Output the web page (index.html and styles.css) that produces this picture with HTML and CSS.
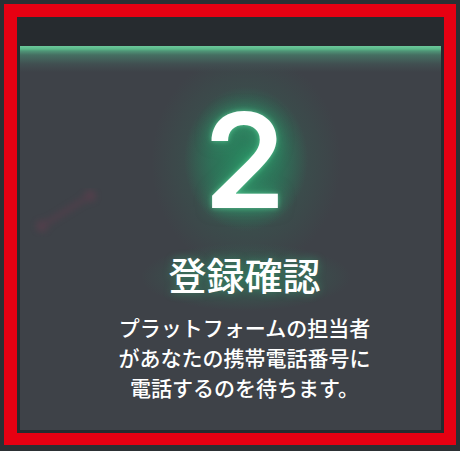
FILE: index.html
```html
<!DOCTYPE html>
<html lang="ja">
<head>
<meta charset="utf-8">
<link rel="stylesheet" href="styles.css">
</head>
<body>
<div class="frame">
  <div class="inner">
    <div class="topbar"></div>
    <div class="panel">
      <svg class="smudge" width="80" height="50" viewBox="0 0 80 50">
        <defs><filter id="b"><feGaussianBlur stdDeviation="3"/></filter></defs>
        <g filter="url(#b)" fill="#7a3a52" opacity="0.35">
          <circle cx="12" cy="38" r="6"/>
          <circle cx="60" cy="8" r="6"/>
          <path d="M12 38 L60 8" stroke="#6a3a50" stroke-width="6"/>
        </g>
      </svg>
      <div class="num">2</div>
      <div class="title">登録確認</div>
      <p class="desc">プラットフォームの担当者<br>があなたの携帯電話番号に<br>電話するのを待ちます。</p>
    </div>
  </div>
</div>
</body>
</html>
```
FILE: styles.css
```css
html, body {
  margin: 0;
  padding: 0;
  background: #2b3034;
}
body {
  width: 460px;
  height: 451px;
  overflow: hidden;
  font-family: "Noto Sans CJK JP", "Noto Sans", sans-serif;
}
.frame {
  margin: 4px 0 0 4px;
  width: 427px;
  height: 416px;
  border-style: solid;
  border-color: #e60012;
  border-width: 13px 12px 12px 13px;
}
.inner {
  height: 100%;
  background: #262b2f;
  padding: 0 3px 3px;
  box-sizing: border-box;
  display: flex;
  flex-direction: column;
}
.topbar {
  height: 29px;
  flex: none;
}
.panel {
  flex: 1;
  position: relative;
  padding-left: 28px;
  background:
    linear-gradient(to bottom, #6cc89c 0, #5bb98a 3px, #4f9577 5px, #456f62 9px, #414f51 18px, rgba(62,66,72,0) 26px),
    radial-gradient(ellipse 62px 72px at 226px 113px, rgba(40,135,95,0.95) 0, rgba(42,125,92,0.7) 55%, rgba(62,66,72,0) 100%),
    radial-gradient(ellipse 95px 110px at 226px 116px, rgba(45,120,90,0.5) 0, rgba(62,66,72,0) 100%),
    radial-gradient(ellipse 105px 34px at 226px 231px, rgba(45,125,92,0.5) 0, rgba(62,66,72,0) 100%),
    #3e4248;
  display: flex;
  flex-direction: column;
  align-items: center;
  color: #fff;
}
.smudge {
  position: absolute;
  left: 10px;
  top: 142px;
}
.num {
  margin-top: 48px;
  font-family: "Inter", "Liberation Sans", sans-serif;
  font-weight: 600;
  font-size: 132px;
  line-height: 132px;
  color: #fff;
  text-shadow: 0 0 5px rgba(110, 230, 170, 0.6), 0 0 16px rgba(60, 190, 130, 0.6);
}
.title {
  margin-top: 26px;
  font-size: 38px;
  line-height: 44px;
  font-weight: 500;
  text-shadow: 0 0 8px rgba(60, 190, 130, 0.45);
}
.desc {
  margin: 16px 0 0;
  font-size: 21px;
  line-height: 30px;
  font-weight: 500;
  text-align: center;
}
```
